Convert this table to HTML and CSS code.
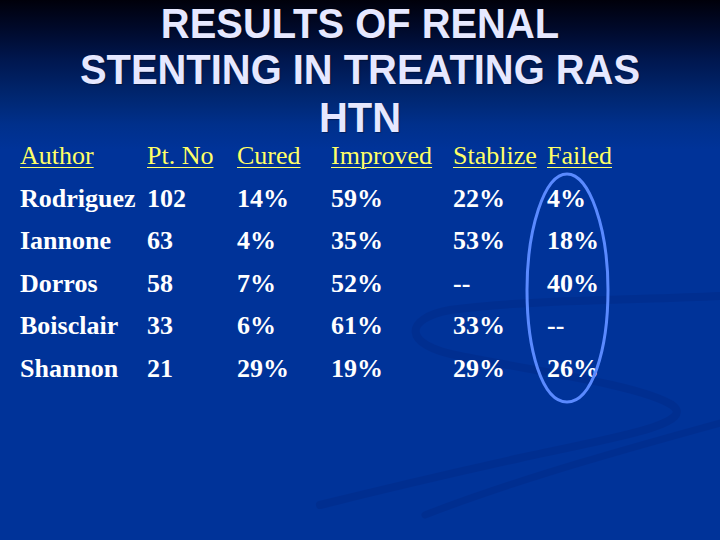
FILE: index.html
```html
<!DOCTYPE html>
<html>
<head>
<meta charset="utf-8">
<link rel="stylesheet" href="styles.css">
</head>
<body>
<div class="slide">
  <svg class="swoosh" width="720" height="540" viewBox="0 0 720 540">
    <path d="M720 296 C 640 300, 520 300, 450 310 C 405 318, 400 345, 460 356 C 540 372, 640 385, 672 405 C 700 425, 600 440, 520 458 C 430 478, 360 495, 320 505" />
    <path class="thin" d="M720 423 C 640 445, 520 478, 425 515" />
  </svg>
  <h1 class="title">
    <span class="tl first">RESULTS OF RENAL</span>
    <span class="tl">STENTING IN TREATING RAS</span>
    <span class="tl last">HTN</span>
  </h1>
  <div class="table">
    <div class="row head">
      <span>Author</span><span>Pt. No</span><span>Cured</span><span>Improved</span><span>Stablize</span><span>Failed</span>
    </div>
    <div class="row">
      <span>Rodriguez</span><span>102</span><span>14%</span><span>59%</span><span>22%</span><span>4%</span>
    </div>
    <div class="row">
      <span>Iannone</span><span>63</span><span>4%</span><span>35%</span><span>53%</span><span>18%</span>
    </div>
    <div class="row">
      <span>Dorros</span><span>58</span><span>7%</span><span>52%</span><span>--</span><span>40%</span>
    </div>
    <div class="row">
      <span>Boisclair</span><span>33</span><span>6%</span><span>61%</span><span>33%</span><span>--</span>
    </div>
    <div class="row">
      <span>Shannon</span><span>21</span><span>29%</span><span>19%</span><span>29%</span><span>26%</span>
    </div>
  </div>
  <svg class="oval" width="720" height="540" viewBox="0 0 720 540">
    <path d="M567 174 C 590 174, 608 230, 608 290 C 608 350, 592 402, 567 402 C 542 402, 527 350, 527 290 C 527 230, 544 174, 567 174 Z" />
  </svg>
</div>
</body>
</html>
```
FILE: styles.css
```css
* { box-sizing: border-box; }
html, body { margin: 0; padding: 0; }
body { width: 720px; height: 540px; overflow: hidden; }
.slide {
  position: relative;
  width: 720px;
  height: 540px;
  background: linear-gradient(#00000a 0px, #000a2c 30px, #00174f 60px, #00266f 95px, #00308c 125px, #003399 150px, #003399 540px);
  overflow: hidden;
}
.swoosh {
  position: absolute;
  left: 0; top: 0;
  fill: none;
  stroke: #00237a;
  stroke-width: 8;
  stroke-linecap: round;
  opacity: 0.28;
}
.swoosh .thin { stroke-width: 7; }
.title {
  position: relative;
  margin: 0;
  text-align: center;
  font-family: "Liberation Sans", Arial, sans-serif;
  font-weight: bold;
  font-size: 42px;
  color: #e6e8ff;
  text-shadow: 1px 1px 1px rgba(0,0,0,0.35);
}
.tl {
  display: block;
  height: 48.5px;
  line-height: 41px;
  white-space: nowrap;
  transform: scaleX(0.95);
}
.tl.first { line-height: 47px; }
.tl.last { height: 41px; }
.table {
  position: relative;
  padding-left: 20px;
  font-family: "Liberation Serif", "Times New Roman", serif;
  font-size: 26px;
}
.row {
  display: grid;
  grid-template-columns: 127px 90px 94px 122px 94px 1fr;
  height: 42.6px;
  line-height: 36.6px;
  color: #ffffff;
  font-weight: bold;
  white-space: nowrap;
}
.row.head {
  color: #ffff66;
  font-weight: normal;
}
.row.head span {
  text-decoration: underline;
  text-decoration-thickness: 1px;
  text-underline-offset: 3px;
}
.oval {
  position: absolute;
  left: 0; top: 0;
  fill: none;
  stroke: #5a8aff;
  stroke-width: 3;
}
```
